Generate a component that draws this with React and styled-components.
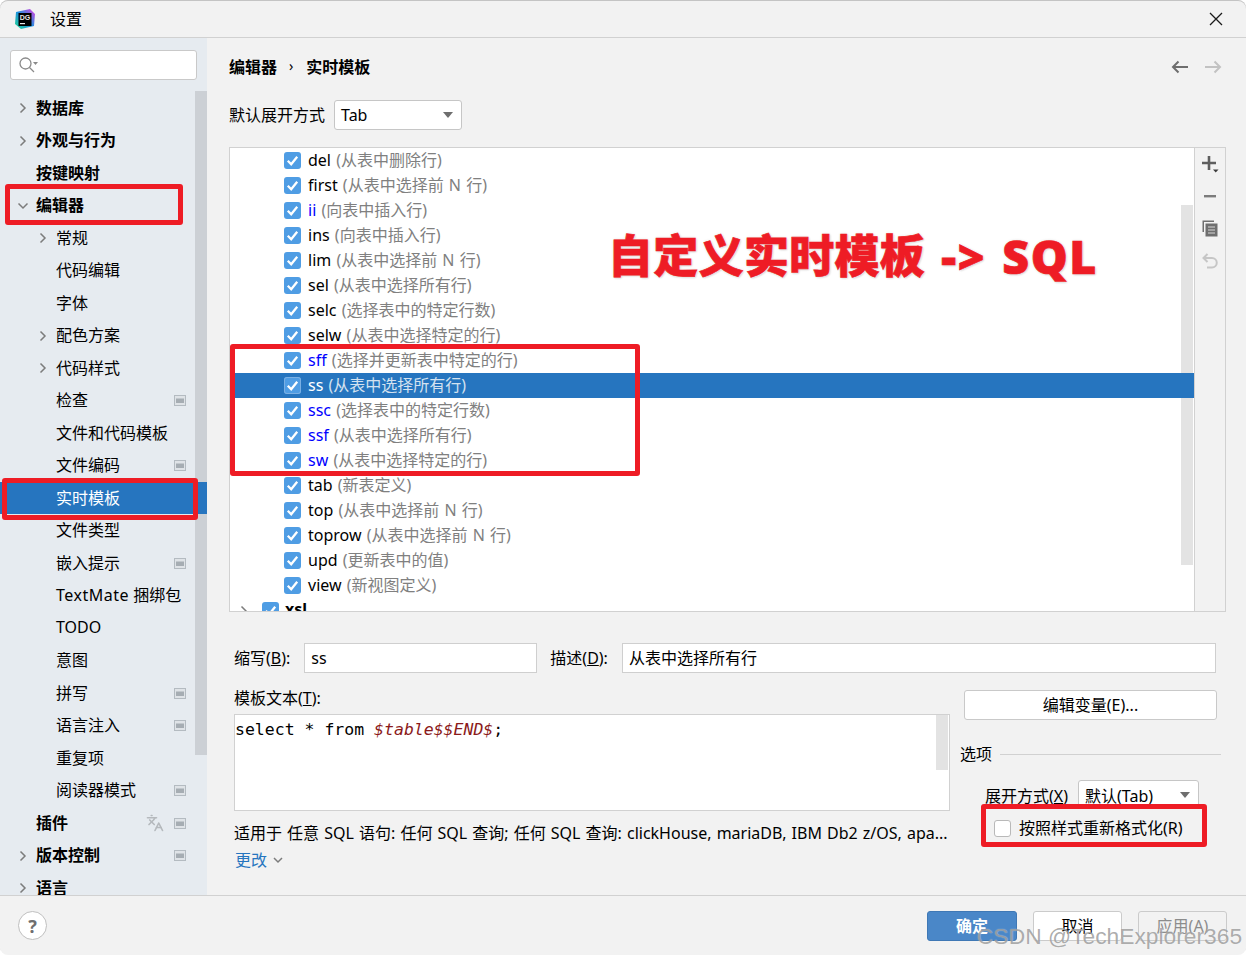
import React from 'react'
import styled, { createGlobalStyle } from 'styled-components'
import { Languages } from 'lucide-react'

const GlobalStyle = createGlobalStyle`
    html, body {
        margin: 0;
        padding: 0;
        background: #fff;
    }
    * {
        box-sizing: border-box;
    }
`

const Window = styled.div`
    position: relative;
    width: 1246px;
    height: 955px;
    display: flex;
    flex-direction: column;
    overflow: hidden;
    background: #f2f2f2;
    border-radius: 8px;
    box-shadow: inset 0 1px 0 #c4c4c4;
    color: #000;
    font-family: 'Noto Sans', 'Noto Sans CJK SC', sans-serif;
    font-size: 16px;
`

const TitleBar = styled.div`
    height: 38px;
    flex: none;
    display: flex;
    align-items: center;
    padding: 0 23px 0 15px;
    border-bottom: 1px solid #d1d1d1;
`

const TitleText = styled.span`
    margin-left: 15px;
    margin-bottom: 2px;
    flex: 1;
`

const Body = styled.div`
    flex: 1;
    min-height: 0;
    display: flex;
`

/* the CJK face sits low in its line box, this lifts a label inside a centred row */
const Label = styled.span`
    margin-bottom: 3px;
`

const Sidebar = styled.aside`
    position: relative;
    width: 207px;
    flex: none;
    overflow: hidden;
    padding-top: 12px;
    background: #e6ebf0;
`

const Search = styled.div`
    width: 187px;
    height: 30px;
    margin-left: 10px;
    display: flex;
    align-items: center;
    padding-left: 7px;
    background: #fff;
    border: 1px solid #c9c9c9;
    border-radius: 3px;
`

const SideList = styled.div`
    margin-top: 11.75px;
`

const SideRow = styled.div`
    position: relative;
    z-index: 1;
    height: 32.5px;
    display: flex;
    align-items: center;
    padding-left: ${p => (p.$child ? 36 : 16)}px;
    padding-right: 21px;
    font-weight: ${p => (p.$child ? 400 : 700)};
    white-space: nowrap;
    background: ${p => (p.$active ? '#2675bf' : 'transparent')};
    color: ${p => (p.$active ? '#fff' : '#000')};
`

const WideLatin = styled.span`
    letter-spacing: 0.5px;
`

const Slot = styled.span`
    width: 20px;
    flex: none;
    display: flex;
    align-items: center;
`

const SideTail = styled.span`
    margin-left: auto;
    display: flex;
    align-items: center;
    gap: 10px;
`

const SideScroll = styled.div`
    position: absolute;
    left: 195px;
    top: 53px;
    width: 12px;
    height: 664px;
    background: #ccd0d5;
`

const Main = styled.main`
    flex: 1;
    min-width: 0;
    padding-left: 22px;
`

const Header = styled.div`
    height: 58px;
    display: flex;
    align-items: center;
    padding-right: 24px;
    font-weight: 700;
`

const Crumb = styled.span`
    margin: 0 13px 3px 12px;
    font-weight: 400;
    font-size: 14px;
    line-height: 1;
`

const Arrows = styled.div`
    margin-left: auto;
    display: flex;
    gap: 17px;
`

const ModeRow = styled.div`
    margin-top: 4px;
    height: 30px;
    display: flex;
    align-items: center;
    gap: 9px;
`

const Select = styled.div`
    width: ${p => p.$width}px;
    height: ${p => p.$height}px;
    display: flex;
    align-items: center;
    justify-content: space-between;
    padding: 0 8px 0 6px;
    background: #fff;
    border: 1px solid #c6c6c6;
    border-radius: 3px;
`

const Caret = styled.span`
    width: 0;
    height: 0;
    border-left: 5.5px solid transparent;
    border-right: 5.5px solid transparent;
    border-top: 6px solid #6e6e6e;
`

const ListPanel = styled.div`
    margin-top: 17px;
    width: 997px;
    height: 465px;
    display: flex;
    background: #fff;
    border: 1px solid #d1d1d1;
`

const Rows = styled.div`
    position: relative;
    flex: 1;
    min-width: 0;
    overflow: hidden;
`

const Row = styled.div`
    position: relative;
    z-index: ${p => (p.$selected ? 1 : 0)};
    height: 25px;
    display: flex;
    align-items: center;
    gap: 7px;
    padding-left: 54px;
    white-space: nowrap;
    word-spacing: 1px;
    background: ${p => (p.$selected ? '#2675bf' : 'transparent')};
    color: ${p => (p.$selected ? '#fff' : '#000')};
`

const GroupRow = styled.div`
    height: 25px;
    display: flex;
    align-items: center;
    padding-left: 7px;
    font-weight: 700;
    white-space: nowrap;

    & > svg {
        margin-right: 11px;
    }

    & > ${Label} {
        margin-left: 6px;
    }
`

const Abbr = styled.span`
    color: ${p => (p.$selected ? '#fff' : p.$changed ? '#0000ff' : '#000')};
`

const Desc = styled.span`
    color: ${p => (p.$selected ? '#d4e2f0' : '#808080')};
`

const Check = styled.span`
    width: 17px;
    height: 17px;
    flex: none;
    display: flex;
    align-items: center;
    justify-content: center;
    background: #4f9de4;
    border-radius: 3px;
    box-shadow: ${p => (p.$selected ? 'inset 0 0 0 1px #7ab0e4' : 'none')};
`

const ListScroll = styled.div`
    position: absolute;
    left: 951px;
    top: 57px;
    width: 12px;
    height: 360px;
    background: #e3e3e3;
`

const Toolbar = styled.div`
    width: 31px;
    flex: none;
    border-left: 1px solid #d1d1d1;
    background: #f2f2f2;
`

const ToolButton = styled.div`
    height: 32.3px;
    display: flex;
    align-items: center;
    justify-content: center;
`

const Form = styled.div`
    padding-left: 5px;
`

const FieldRow = styled.div`
    margin-top: 31px;
    height: 30px;
    display: flex;
    align-items: center;
`

const FieldLabel = styled.label`
    white-space: nowrap;
    margin-right: 14px;
    margin-bottom: 2px;
`

const Input = styled.div`
    width: ${p => p.$width}px;
    height: 30px;
    display: flex;
    align-items: center;
    padding-left: 6px;
    margin-right: 13px;
    background: #fff;
    border: 1px solid #cfcfcf;
`

const Lower = styled.div`
    margin-top: 13px;
    display: flex;
    gap: 10px;
`

const LeftColumn = styled.div`
    width: 716px;
    flex: none;
`

const LineLabel = styled.div`
    height: 24px;
    line-height: 24px;
    white-space: nowrap;
`

const Editor = styled.div`
    position: relative;
    height: 97px;
    margin-top: 4px;
    padding: 3px 0 0 0;
    background: #fff;
    border: 1px solid #d1d1d1;
    font-family: 'DejaVu Sans Mono', 'Liberation Mono', monospace;
    font-size: 16.5px;
    line-height: 24px;
    white-space: pre;
`

const TemplateVar = styled.span`
    color: #8b1a1a;
    font-style: italic;
`

const EditorScroll = styled.div`
    position: absolute;
    right: 1px;
    top: 0;
    width: 12px;
    height: 55px;
    background: #e3e3e3;
`

const Note = styled.div`
    margin-top: 10px;
    height: 24px;
    line-height: 24px;
    white-space: nowrap;
    word-spacing: 0.95px;
`

const MoreLink = styled.div`
    margin-top: 3px;
    padding-left: 1px;
    height: 24px;
    display: flex;
    align-items: center;
    gap: 5px;
    color: #2675bf;
`

const RightColumn = styled.div`
    flex: 1;
    padding-top: 4px;
`

const PlainButton = styled.div`
    margin-left: 4px;
    width: 253px;
    height: 30px;
    display: flex;
    align-items: center;
    justify-content: center;
    background: #fff;
    border: 1px solid #c9c9c9;
    border-radius: 3px;
`

const OptionsTitle = styled.div`
    margin-top: 22px;
    height: 24px;
    width: 261px;
    display: flex;
    align-items: center;
    gap: 8px;

    &::after {
        content: '';
        flex: 1;
        height: 1px;
        background: #d1d1d1;
    }
`

const ExpandRow = styled.div`
    margin-top: 14px;
    padding-left: 25px;
    display: flex;
    align-items: center;
    gap: 10px;
    white-space: nowrap;
`

const ReformatRow = styled.div`
    margin-top: 7px;
    height: 24px;
    padding-left: 34px;
    display: flex;
    align-items: center;
    gap: 8px;
    white-space: nowrap;
`

const EmptyCheck = styled.span`
    width: 17px;
    height: 17px;
    background: #fff;
    border: 1px solid #b9b9b9;
    border-radius: 3px;
`

const Footer = styled.footer`
    height: 60px;
    flex: none;
    display: flex;
    padding: 15px 19px 0 18px;
    border-top: 1px solid #d1d1d1;
`

const Help = styled.div`
    width: 29px;
    height: 29px;
    display: flex;
    align-items: center;
    justify-content: center;
    background: #fff;
    border: 1px solid #bfbfbf;
    border-radius: 50%;
    color: #6e6e6e;
    font-size: 18px;
    font-weight: 700;
`

const Buttons = styled.div`
    margin-left: auto;
    display: flex;
    gap: 16px;
`

const DialogButton = styled.div`
    width: ${p => p.$width}px;
    height: 30px;
    display: flex;
    align-items: center;
    justify-content: center;
    border-radius: 3px;
    border: 1px solid ${p => (p.$primary ? '#3f78b5' : '#cbcbcb')};
    background: ${p => (p.$primary ? '#4a87c8' : p.$disabled ? '#f2f2f2' : '#fff')};
    color: ${p => (p.$primary ? '#fff' : p.$disabled ? '#8c8c8c' : '#000')};
    font-weight: ${p => (p.$primary ? 700 : 400)};
`

// red marks drawn over the screenshot
const Callout = styled.div`
    position: absolute;
    z-index: 5;
    left: ${p => p.$left}px;
    top: ${p => p.$top}px;
    width: ${p => p.$width}px;
    height: ${p => p.$height}px;
    border: 5px solid #ee1c25;
    border-radius: 3px;
    pointer-events: none;
`

const Headline = styled.div`
    position: absolute;
    z-index: 5;
    left: 608px;
    top: 223px;
    display: flex;
    align-items: center;
    white-space: nowrap;
    color: #ee1c25;
    font-size: 45px;
    font-weight: 900;
    line-height: 66px;
    letter-spacing: 0.3px;
    -webkit-text-stroke: 0.7px #ee1c25;
    text-shadow: 0 0 2px #fff, 0 0 3px #d8d8d8, 1px 1px 2px #cfcfcf;
`

const HeadlineLatin = styled.span`
    font-family: 'Open Sans', 'Noto Sans', sans-serif;
    font-weight: 800;
    font-size: 46.5px;
    letter-spacing: 1.5px;
    word-spacing: 2.5px;
    white-space: pre;
`

const Watermark = styled.div`
    position: absolute;
    z-index: 6;
    left: 977px;
    top: 921px;
    font-family: 'Liberation Sans', sans-serif;
    font-size: 22.8px;
    line-height: 30px;
    white-space: nowrap;
    color: rgba(120, 120, 120, 0.62);
    text-shadow: 0 0 1px rgba(255, 255, 255, 0.7);
`

const Logo = () => (
    <svg width="20" height="20" viewBox="0 0 20 20">
        <defs>
            <linearGradient id="dg" x1="0" y1="1" x2="1" y2="0">
                <stop offset="0" stopColor="#22d88f" />
                <stop offset="0.5" stopColor="#1f8fe0" />
                <stop offset="1" stopColor="#e83ee0" />
            </linearGradient>
        </defs>
        <path d="M1 3 L15 0 L20 5 L19 17 L6 20 L0 15 Z" fill="url(#dg)" />
        <rect x="3.5" y="4" width="13" height="13" fill="#000" />
        <text x="10" y="10.5" textAnchor="middle" fill="#e8e8e8" fontSize="7" fontWeight="700" fontFamily="Liberation Sans, sans-serif">DG</text>
        <rect x="5" y="14" width="5" height="1.2" fill="#e8e8e8" />
    </svg>
)

const Chevron = ({ down, color = '#7c7c7c' }) => (
    <svg width="14" height="14" viewBox="0 0 14 14" fill="none" stroke={color} strokeWidth="1.5">
        {down ? <path d="M2.5 4.5 L7 9 L11.5 4.5" /> : <path d="M4.5 2.5 L9 7 L4.5 11.5" />}
    </svg>
)

const Tick = () => (
    <svg width="13" height="13" viewBox="0 0 13 13" fill="none" stroke="#fff" strokeWidth="2.3">
        <path d="M1.8 6.8 L5.2 10.2 L11.2 2.8" />
    </svg>
)

const ProjectBadge = () => (
    <svg width="12" height="11" viewBox="0 0 12 11">
        <rect x="0.5" y="0.5" width="11" height="10" fill="#dfe3e7" stroke="#b4bbc1" />
        <rect x="2" y="3.5" width="8" height="4.5" fill="#a6adb3" />
    </svg>
)

const sideItems = [
    { label: '数据库', arrow: true },
    { label: '外观与行为', arrow: true },
    { label: '按键映射' },
    { label: '编辑器', arrow: true, open: true },
    { label: '常规', child: true, arrow: true },
    { label: '代码编辑', child: true },
    { label: '字体', child: true },
    { label: '配色方案', child: true, arrow: true },
    { label: '代码样式', child: true, arrow: true },
    { label: '检查', child: true, badge: true },
    { label: '文件和代码模板', child: true },
    { label: '文件编码', child: true, badge: true },
    { label: '实时模板', child: true, active: true },
    { label: '文件类型', child: true },
    { label: '嵌入提示', child: true, badge: true },
    { label: <><WideLatin>TextMate</WideLatin> 捆绑包</>, child: true },
    { label: 'TODO', child: true },
    { label: '意图', child: true },
    { label: '拼写', child: true, badge: true },
    { label: '语言注入', child: true, badge: true },
    { label: '重复项', child: true },
    { label: '阅读器模式', child: true, badge: true },
    { label: '插件', badge: true, translate: true },
    { label: '版本控制', arrow: true, badge: true },
    { label: '语言', arrow: true },
]

const templates = [
    ['del', '从表中删除行'],
    ['first', '从表中选择前 N 行'],
    ['ii', '向表中插入行', true],
    ['ins', '向表中插入行'],
    ['lim', '从表中选择前 N 行'],
    ['sel', '从表中选择所有行'],
    ['selc', '选择表中的特定行数'],
    ['selw', '从表中选择特定的行'],
    ['sff', '选择并更新表中特定的行', true],
    ['ss', '从表中选择所有行', true],
    ['ssc', '选择表中的特定行数', true],
    ['ssf', '从表中选择所有行', true],
    ['sw', '从表中选择特定的行', true],
    ['tab', '新表定义'],
    ['top', '从表中选择前 N 行'],
    ['toprow', '从表中选择前 N 行'],
    ['upd', '更新表中的值'],
    ['view', '新视图定义'],
]

export default () => {
    return (
        <Window>
            <GlobalStyle />
            <TitleBar>
                <Logo />
                <TitleText>设置</TitleText>
                <svg width="14" height="14" viewBox="0 0 14 14" stroke="#1a1a1a" strokeWidth="1.3">
                    <path d="M1 1 L13 13 M13 1 L1 13" />
                </svg>
            </TitleBar>
            <Body>
                <Sidebar>
                    <Search>
                        <svg width="22" height="18" viewBox="0 0 22 18" fill="none" stroke="#8a8a8a" strokeWidth="1.3">
                            <circle cx="7.5" cy="7.5" r="5.5" />
                            <path d="M11.5 11.5 L16 16" />
                            <path d="M15 6 H20 L17.5 9 Z" fill="#8a8a8a" stroke="none" />
                        </svg>
                    </Search>
                    <SideList>
                        {sideItems.map((item, i) => (
                            <SideRow key={i} $child={item.child} $active={item.active}>
                                <Slot>{item.arrow && <Chevron down={item.open} />}</Slot>
                                <Label>{item.label}</Label>
                                {(item.badge || item.translate) && (
                                    <SideTail>
                                        {item.translate && <Languages size={18} color="#b5b9bd" strokeWidth={2.2} />}
                                        {item.badge && <ProjectBadge />}
                                    </SideTail>
                                )}
                            </SideRow>
                        ))}
                    </SideList>
                    <SideScroll />
                </Sidebar>
                <Main>
                    <Header>
                        <Label>编辑器</Label>
                        <Crumb>›</Crumb>
                        <Label>实时模板</Label>
                        <Arrows>
                            <svg width="17" height="14" viewBox="0 0 17 14" fill="none" stroke="#6e6e6e" strokeWidth="2">
                                <path d="M17 7 H2 M7.5 1.5 L2 7 L7.5 12.5" />
                            </svg>
                            <svg width="17" height="14" viewBox="0 0 17 14" fill="none" stroke="#c2c2c2" strokeWidth="2">
                                <path d="M0 7 H15 M9.5 1.5 L15 7 L9.5 12.5" />
                            </svg>
                        </Arrows>
                    </Header>
                    <ModeRow>
                        <Label>默认展开方式</Label>
                        <Select $width={128} $height={30}>
                            Tab
                            <Caret />
                        </Select>
                    </ModeRow>
                    <ListPanel>
                        <Rows>
                            {templates.map(([abbr, desc, changed]) => {
                                const selected = abbr === 'ss'
                                return (
                                    <Row key={abbr} $selected={selected}>
                                        <Check $selected={selected}><Tick /></Check>
                                        <Label>
                                            <Abbr $selected={selected} $changed={changed}>{abbr}</Abbr>{' '}
                                            <Desc $selected={selected}>({desc})</Desc>
                                        </Label>
                                    </Row>
                                )
                            })}
                            <GroupRow>
                                <Chevron />
                                <Check><Tick /></Check>
                                <Label>xsl</Label>
                            </GroupRow>
                            <ListScroll />
                        </Rows>
                        <Toolbar>
                            <ToolButton>
                                <svg width="18" height="18" viewBox="0 0 18 18">
                                    <path d="M6.7 1 H9.3 V6.7 H15 V9.3 H9.3 V15 H6.7 V9.3 H1 V6.7 H6.7 Z" fill="#5e5e5e" />
                                    <path d="M12 14.5 H17.5 L14.75 17.5 Z" fill="#3c3c3c" />
                                </svg>
                            </ToolButton>
                            <ToolButton>
                                <svg width="14" height="14" viewBox="0 0 14 14">
                                    <rect x="1" y="6" width="12" height="2.4" fill="#7c7c7c" />
                                </svg>
                            </ToolButton>
                            <ToolButton>
                                <svg width="16" height="17" viewBox="0 0 16 17">
                                    <path d="M0.5 0.5 H12 V2 H2 V12 H0.5 Z" fill="#6e6e6e" />
                                    <path d="M3.5 3.5 H15.5 V16.5 H3.5 Z" fill="#6e6e6e" />
                                    <path d="M6 6.5 H13 V7.5 H6 Z M6 9.5 H13 V10.5 H6 Z M6 12.5 H13 V13.5 H6 Z" fill="#d6d6d6" />
                                </svg>
                            </ToolButton>
                            <ToolButton>
                                <svg width="16" height="16" viewBox="0 0 16 16" fill="none" stroke="#c6c6c6" strokeWidth="2">
                                    <path d="M5.5 1 L1.5 5 L5.5 9 M2 5 H10 A4.5 4.5 0 0 1 10 14.5 H5" />
                                </svg>
                            </ToolButton>
                        </Toolbar>
                    </ListPanel>
                    <Form>
                        <FieldRow>
                            <FieldLabel>缩写(<u>B</u>):</FieldLabel>
                            <Input $width={233}>ss</Input>
                            <FieldLabel>描述(<u>D</u>):</FieldLabel>
                            <Input $width={594}><Label>从表中选择所有行</Label></Input>
                        </FieldRow>
                        <Lower>
                            <LeftColumn>
                                <LineLabel>模板文本(<u>T</u>):</LineLabel>
                                <Editor>
                                    select * from <TemplateVar>$table$$END$</TemplateVar>;
                                    <EditorScroll />
                                </Editor>
                                <Note>适用于 任意 SQL 语句: 任何 SQL 查询; 任何 SQL 查询: clickHouse, mariaDB, IBM Db2 z/OS, apa...</Note>
                                <MoreLink>
                                    <Label>更改</Label>
                                    <svg width="12" height="12" viewBox="0 0 12 12" fill="none" stroke="#7c7c7c" strokeWidth="1.5">
                                        <path d="M2 4 L6 8 L10 4" />
                                    </svg>
                                </MoreLink>
                            </LeftColumn>
                            <RightColumn>
                                <PlainButton><Label>编辑变量(E)...</Label></PlainButton>
                                <OptionsTitle><Label>选项</Label></OptionsTitle>
                                <ExpandRow>
                                    <span>展开方式(<u>X</u>)</span>
                                    <Select $width={121} $height={29}>
                                        默认(Tab)
                                        <Caret />
                                    </Select>
                                </ExpandRow>
                                <ReformatRow>
                                    <EmptyCheck />
                                    <Label>按照样式重新格式化(R)</Label>
                                </ReformatRow>
                            </RightColumn>
                        </Lower>
                    </Form>
                </Main>
            </Body>
            <Footer>
                <Help>?</Help>
                <Buttons>
                    <DialogButton $width={90} $primary><Label>确定</Label></DialogButton>
                    <DialogButton $width={89}><Label>取消</Label></DialogButton>
                    <DialogButton $width={89} $disabled><Label>应用(A)</Label></DialogButton>
                </Buttons>
            </Footer>
            <Callout $left={5} $top={184} $width={178} $height={41} />
            <Callout $left={2} $top={478} $width={196} $height={42} />
            <Callout $left={230} $top={344} $width={410} $height={132} />
            <Callout $left={981} $top={804} $width={226} $height={43} />
            <Headline>自定义实时模板<HeadlineLatin> -&gt; SQL</HeadlineLatin></Headline>
            <Watermark>CSDN @TechExplorer365</Watermark>
        </Window>
    )
}
